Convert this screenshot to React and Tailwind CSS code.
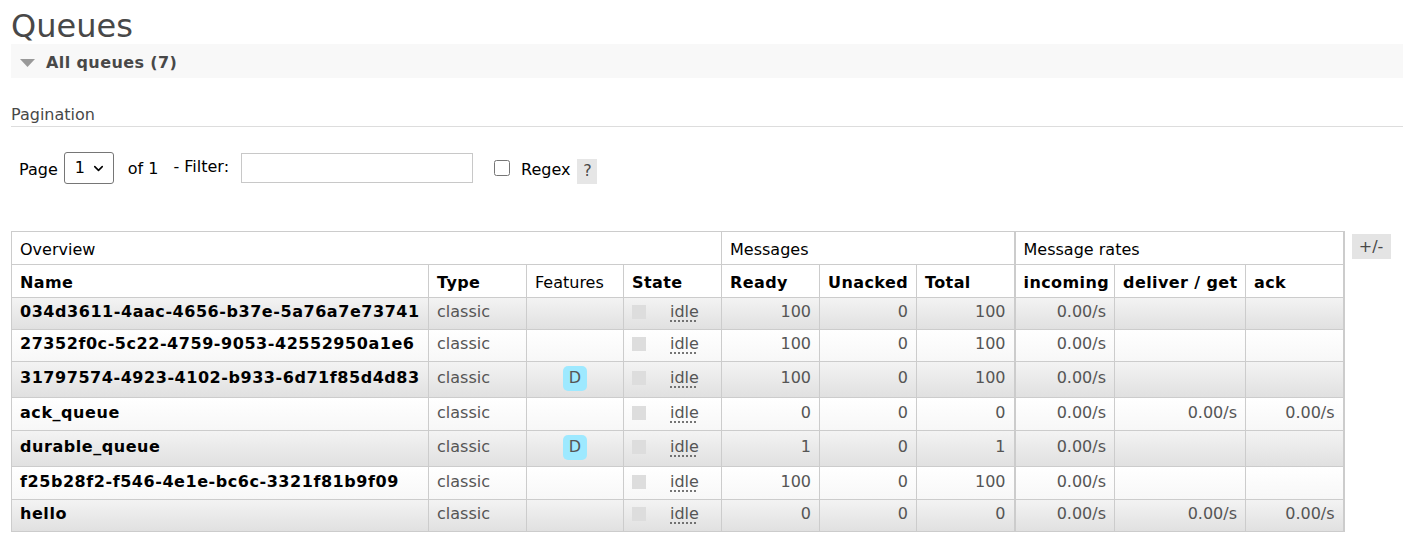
import React from 'react';
import { ChevronDown } from 'lucide-react';

const queues = [
  { name: '034d3611-4aac-4656-b37e-5a76a7e73741', durable: false, ready: 100, unacked: 0, total: 100, incoming: '0.00/s', deliver: '', ack: '', h: 'h-[32px]' },
  { name: '27352f0c-5c22-4759-9053-42552950a1e6', durable: false, ready: 100, unacked: 0, total: 100, incoming: '0.00/s', deliver: '', ack: '', h: 'h-[32px]' },
  { name: '31797574-4923-4102-b933-6d71f85d4d83', durable: true, ready: 100, unacked: 0, total: 100, incoming: '0.00/s', deliver: '', ack: '', h: 'h-[36px]' },
  { name: 'ack_queue', durable: false, ready: 0, unacked: 0, total: 0, incoming: '0.00/s', deliver: '0.00/s', ack: '0.00/s', h: 'h-[33px]' },
  { name: 'durable_queue', durable: true, ready: 1, unacked: 0, total: 1, incoming: '0.00/s', deliver: '', ack: '', h: 'h-[36px]' },
  { name: 'f25b28f2-f546-4e1e-bc6c-3321f81b9f09', durable: false, ready: 100, unacked: 0, total: 100, incoming: '0.00/s', deliver: '', ack: '', h: 'h-[33px]' },
  { name: 'hello', durable: false, ready: 0, unacked: 0, total: 0, incoming: '0.00/s', deliver: '0.00/s', ack: '0.00/s', h: 'h-[32px]' },
];

const td = 'border border-[#ccc] px-[8px] pb-[3px] align-middle';
const th = 'border border-[#ccc] px-[8px] pt-[4px] align-middle';

const QueueRow = ({ q, alt }) => {
  const bg = alt
    ? 'bg-gradient-to-b from-[#f3f3f3] to-[#e0e0e0]'
    : 'bg-gradient-to-b from-white to-[#f7f7f7]';
  return (
    <tr className={`${bg} ${q.h}`}>
      <td className={`${td} font-bold tracking-[0.55px] text-black`}>{q.name}</td>
      <td className={`${td} text-[#555]`}>classic</td>
      <td className={`${td} text-center`}>
        {q.durable && (
          <span className="inline-flex h-[25px] items-center rounded-[5px] bg-[#9ee9ff] px-[6px] text-[#555]">D</span>
        )}
      </td>
      <td className={td}>
        <div className="flex items-center">
          <span className="h-[14px] w-[14px] bg-[#ddd]" />
          <span className="ml-[24px] text-[#555] underline decoration-dotted decoration-[#555] underline-offset-[4px]">idle</span>
        </div>
      </td>
      <td className={`${td} text-right text-[#555]`}>{q.ready}</td>
      <td className={`${td} text-right text-[#555]`}>{q.unacked}</td>
      <td className={`${td} text-right text-[#555]`}>{q.total}</td>
      <td className={`${td} border-l-2 text-right text-[#555]`}>{q.incoming}</td>
      <td className={`${td} text-right text-[#555]`}>{q.deliver}</td>
      <td className={`${td} border-r-2 text-right text-[#555]`}>{q.ack}</td>
    </tr>
  );
};

export default function App() {
  return (
    <div className="min-h-screen bg-white pl-[11px] font-['DejaVu_Sans',Verdana,sans-serif] text-[16px] text-[#484848]">
      <h1 className="h-[44px] pt-[4px] text-[32px] leading-[44px]">Queues</h1>

      <div className="flex h-[34px] items-center bg-[#f8f8f8] pt-[3px]">
        <svg className="ml-[9px]" width="15" height="8" viewBox="0 0 15 8">
          <path d="M0 0 H15 L7.5 8 Z" fill="#999" />
        </svg>
        <span className="ml-[11px] font-bold tracking-[0.4px]">All queues (7)</span>
      </div>

      <div className="mt-[24px] h-[25px] border-b border-[#ddd] pt-[1px] leading-[24px]">Pagination</div>

      <div className="mt-[25px] flex h-[32px] items-center text-black">
        <span className="ml-[8px] mt-[3px]">Page</span>
        <div className="ml-[6px] flex h-[32px] w-[50px] items-center justify-between rounded-[3px] border border-[#767676] pl-[10px] pr-[7px]">
          <span>1</span>
          <ChevronDown size={15} strokeWidth={2.5} />
        </div>
        <span className="ml-[14px] mt-[1px]">of 1</span>
        <span className="ml-[15px] -mt-[2px]">- Filter:</span>
        <div className="ml-[12px] h-[30px] w-[232px] border border-[#c8c8c8] bg-white" />
        <input type="checkbox" className="ml-[21px] h-[16px] w-[16px]" readOnly />
        <span className="ml-[11px] mt-[3px]">Regex</span>
        <span className="ml-[7px] mt-[6px] flex h-[25px] w-[20px] items-center justify-center bg-[#e6e6e6] text-[#484848]">?</span>
      </div>

      <div className="mt-[47px] flex items-start">
        <table className="w-[1332px] table-fixed border-collapse">
          <colgroup>
            <col className="w-[417px]" />
            <col className="w-[98px]" />
            <col className="w-[97px]" />
            <col className="w-[98px]" />
            <col className="w-[98px]" />
            <col className="w-[97px]" />
            <col className="w-[98px]" />
            <col className="w-[100px]" />
            <col className="w-[131px]" />
            <col className="w-[98px]" />
          </colgroup>
          <thead className="text-left text-black">
            <tr className="h-[33px]">
              <th colSpan={4} className={`${th} font-normal`}>Overview</th>
              <th colSpan={3} className={`${th} font-normal`}>Messages</th>
              <th colSpan={3} className={`${th} border-l-2 border-r-2 font-normal`}>Message rates</th>
            </tr>
            <tr className="h-[33px] tracking-[0.4px]">
              <th className={th}>Name</th>
              <th className={th}>Type</th>
              <th className={`${th} font-normal tracking-normal`}>Features</th>
              <th className={th}>State</th>
              <th className={th}>Ready</th>
              <th className={th}>Unacked</th>
              <th className={th}>Total</th>
              <th className={`${th} border-l-2`}>incoming</th>
              <th className={`${th} whitespace-nowrap`}>deliver / get</th>
              <th className={`${th} border-r-2`}>ack</th>
            </tr>
          </thead>
          <tbody>
            {queues.map((q, i) => (
              <QueueRow key={q.name} q={q} alt={i % 2 === 0} />
            ))}
          </tbody>
        </table>
        <span className="ml-[7px] mt-[3px] flex h-[25px] w-[39px] items-center justify-center bg-[#e4e4e4] text-[#484848]">+/-</span>
      </div>
    </div>
  );
}
